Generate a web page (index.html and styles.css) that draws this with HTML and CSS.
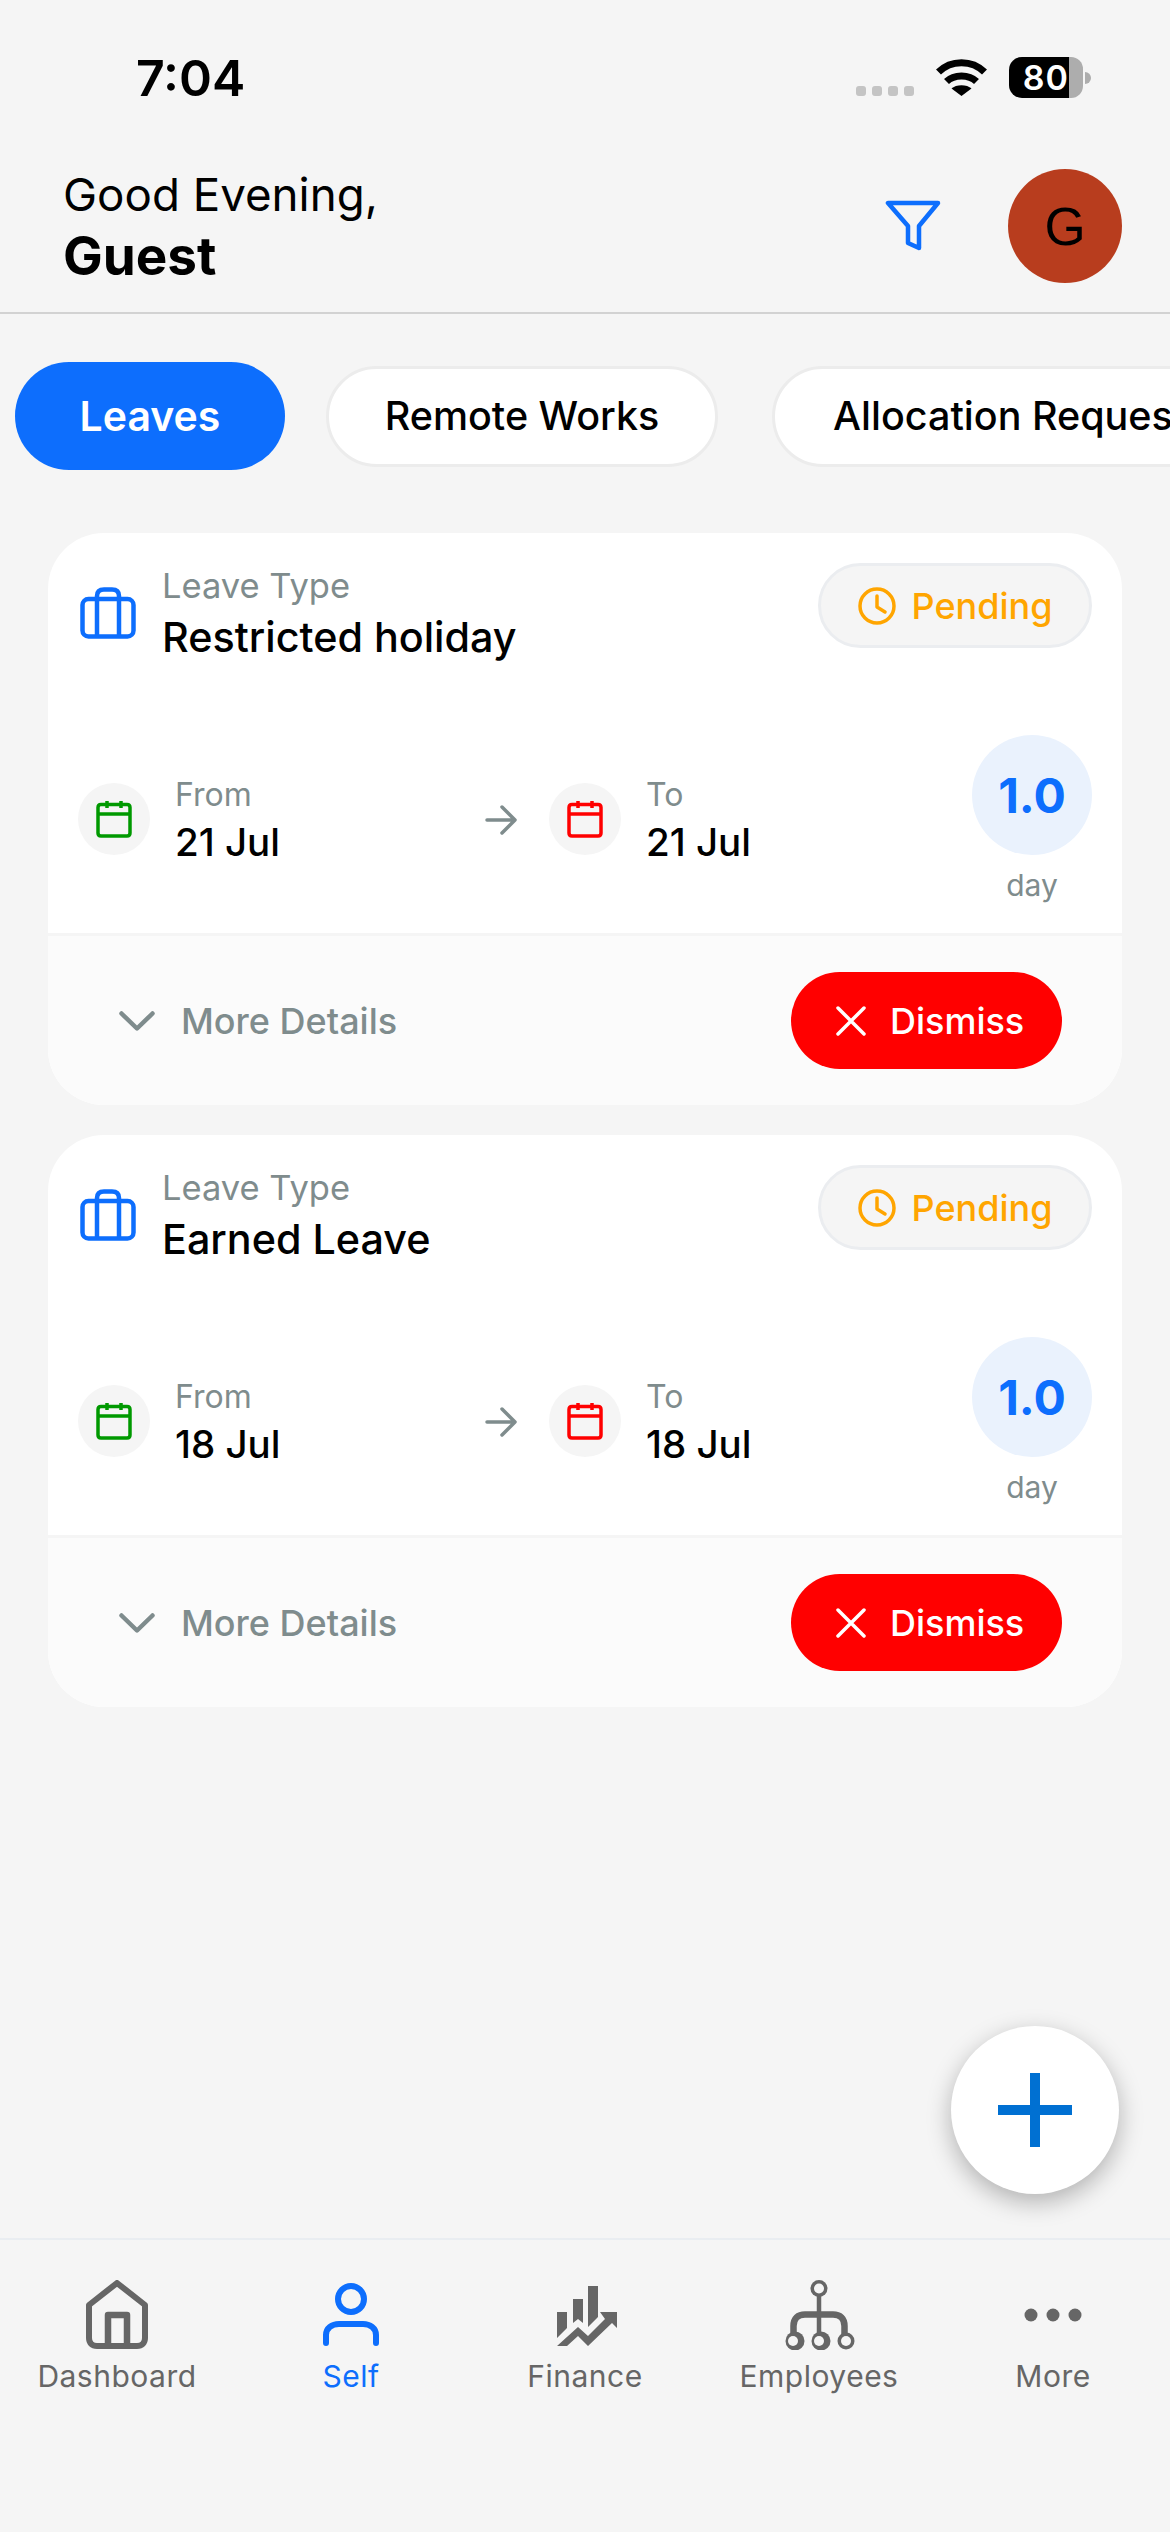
FILE: index.html
```html
<!DOCTYPE html>
<html lang="en">
<head>
<meta charset="utf-8">
<title>Leaves</title>
<link rel="stylesheet" href="styles.css">
</head>
<body>
<div class="app">
  <div class="status">
    <span class="time">7:04</span>
    <div class="status-right">
      <div class="signal"><i></i><i></i><i></i><i></i></div>
      <svg class="wifi" width="51" height="37" viewBox="0 0 51 37"><path d="M2.500 13 C15 0.500 36 0.500 48.500 13" fill="none" stroke="#000" stroke-width="7"/><path d="M10.500 22.500 C18 15 33 15 40.500 22.500" fill="none" stroke="#000" stroke-width="7"/><path d="M25.500 37 L15.500 29.500 C20 25 31 25 35.500 29.500 Z" fill="#000"/></svg>
      <div class="battery"><div class="batt-body"><span class="batt-num">80</span></div><div class="batt-rest"></div><div class="batt-tip"></div></div>
    </div>
  </div>
  <header class="header">
    <div class="greet">
      <div class="greet-line">Good Evening,</div>
      <div class="greet-name">Guest</div>
    </div>
    <svg class="filter" width="56" height="52" viewBox="0 0 56 52"><path d="M3 3 H53 L34 26 V48 L23 43 V26 Z" fill="none" stroke="#0d6efd" stroke-width="4.500" stroke-linejoin="round"/></svg>
    <div class="avatar">G</div>
  </header>
  <nav class="tabs">
    <div class="tab tab-active">Leaves</div>
    <div class="tab tab-b">Remote Works</div>
    <div class="tab tab-c">Allocation Requests</div>
  </nav>
  <main class="list">
    <article class="card">
      <div class="card-top">
        <svg class="case" width="56" height="52" viewBox="0 0 56 52"><rect x="2.500" y="12" width="51" height="37.500" rx="6" fill="none" stroke="#0d6efd" stroke-width="4.500"/><path d="M17 49 V9 C17 4 20 2.500 24 2.500 H32 C36 2.500 39 4 39 9 V49" fill="none" stroke="#0d6efd" stroke-width="4.500"/></svg>
        <div class="type">
          <div class="label">Leave Type</div>
          <div class="type-name">Restricted holiday</div>
        </div>
        <div class="pending">
          <svg width="38" height="38" viewBox="0 0 38 38"><circle cx="19" cy="19" r="17" fill="none" stroke="#ffa500" stroke-width="3.500"/><path d="M19 9 V20 L27 25" fill="none" stroke="#ffa500" stroke-width="3.500" stroke-linecap="round" stroke-linejoin="round"/></svg>
          <span>Pending</span>
        </div>
      </div>
      <div class="dates">
        <div class="date date-from">
          <div class="cal-wrap"><svg width="36" height="38" viewBox="0 0 36 38"><path d="M5 4.500 H31 Q34 4.500 34 7.500 V33 Q34 36 31 36 H5 Q2 36 2 33 V7.500 Q2 4.500 5 4.500 Z M2 14 H34 M11 1 V8 M25 1 V8" fill="none" stroke="#009900" stroke-width="3.500"/></svg></div>
          <div class="date-text"><div class="label-s">From</div><div class="date-val">21 Jul</div></div>
        </div>
        <svg class="arrow" width="32" height="32" viewBox="0 0 32 32"><path d="M2 16 H29 M17 3 L30 16 L17 29" fill="none" stroke="#7f8c8d" stroke-width="3.500" stroke-linecap="round" stroke-linejoin="round"/></svg>
        <div class="date date-to">
          <div class="cal-wrap"><svg width="36" height="38" viewBox="0 0 36 38"><path d="M5 4.500 H31 Q34 4.500 34 7.500 V33 Q34 36 31 36 H5 Q2 36 2 33 V7.500 Q2 4.500 5 4.500 Z M2 14 H34 M11 1 V8 M25 1 V8" fill="none" stroke="#ff0000" stroke-width="3.500"/></svg></div>
          <div class="date-text"><div class="label-s">To</div><div class="date-val">21 Jul</div></div>
        </div>
        <div class="days"><div class="days-num">1.0</div><div class="days-unit">day</div></div>
      </div>
      <div class="card-foot">
        <div class="more">
          <svg width="36" height="20" viewBox="0 0 36 20"><path d="M2.500 2.500 L18 17.500 L33.500 2.500" fill="none" stroke="#7f8c8d" stroke-width="4.500" stroke-linecap="round" stroke-linejoin="round"/></svg>
          <span>More Details</span>
        </div>
        <div class="dismiss">
          <svg width="30" height="30" viewBox="0 0 30 30"><path d="M2 2 L28 28 M28 2 L2 28" stroke="#fff" stroke-width="3.500" stroke-linecap="round"/></svg>
          <span>Dismiss</span>
        </div>
      </div>
    </article>
    <article class="card">
      <div class="card-top">
        <svg class="case" width="56" height="52" viewBox="0 0 56 52"><rect x="2.500" y="12" width="51" height="37.500" rx="6" fill="none" stroke="#0d6efd" stroke-width="4.500"/><path d="M17 49 V9 C17 4 20 2.500 24 2.500 H32 C36 2.500 39 4 39 9 V49" fill="none" stroke="#0d6efd" stroke-width="4.500"/></svg>
        <div class="type">
          <div class="label">Leave Type</div>
          <div class="type-name">Earned Leave</div>
        </div>
        <div class="pending">
          <svg width="38" height="38" viewBox="0 0 38 38"><circle cx="19" cy="19" r="17" fill="none" stroke="#ffa500" stroke-width="3.500"/><path d="M19 9 V20 L27 25" fill="none" stroke="#ffa500" stroke-width="3.500" stroke-linecap="round" stroke-linejoin="round"/></svg>
          <span>Pending</span>
        </div>
      </div>
      <div class="dates">
        <div class="date date-from">
          <div class="cal-wrap"><svg width="36" height="38" viewBox="0 0 36 38"><path d="M5 4.500 H31 Q34 4.500 34 7.500 V33 Q34 36 31 36 H5 Q2 36 2 33 V7.500 Q2 4.500 5 4.500 Z M2 14 H34 M11 1 V8 M25 1 V8" fill="none" stroke="#009900" stroke-width="3.500"/></svg></div>
          <div class="date-text"><div class="label-s">From</div><div class="date-val">18 Jul</div></div>
        </div>
        <svg class="arrow" width="32" height="32" viewBox="0 0 32 32"><path d="M2 16 H29 M17 3 L30 16 L17 29" fill="none" stroke="#7f8c8d" stroke-width="3.500" stroke-linecap="round" stroke-linejoin="round"/></svg>
        <div class="date date-to">
          <div class="cal-wrap"><svg width="36" height="38" viewBox="0 0 36 38"><path d="M5 4.500 H31 Q34 4.500 34 7.500 V33 Q34 36 31 36 H5 Q2 36 2 33 V7.500 Q2 4.500 5 4.500 Z M2 14 H34 M11 1 V8 M25 1 V8" fill="none" stroke="#ff0000" stroke-width="3.500"/></svg></div>
          <div class="date-text"><div class="label-s">To</div><div class="date-val">18 Jul</div></div>
        </div>
        <div class="days"><div class="days-num">1.0</div><div class="days-unit">day</div></div>
      </div>
      <div class="card-foot">
        <div class="more">
          <svg width="36" height="20" viewBox="0 0 36 20"><path d="M2.500 2.500 L18 17.500 L33.500 2.500" fill="none" stroke="#7f8c8d" stroke-width="4.500" stroke-linecap="round" stroke-linejoin="round"/></svg>
          <span>More Details</span>
        </div>
        <div class="dismiss">
          <svg width="30" height="30" viewBox="0 0 30 30"><path d="M2 2 L28 28 M28 2 L2 28" stroke="#fff" stroke-width="3.500" stroke-linecap="round"/></svg>
          <span>Dismiss</span>
        </div>
      </div>
    </article>
  </main>
  <div class="fab"><svg width="74" height="74" viewBox="0 0 74 74"><path d="M37 0 V74 M0 37 H74" stroke="#0070d2" stroke-width="10"/></svg></div>
  <footer class="tabbar">
    <div class="item">
      <svg width="64" height="70" viewBox="0 0 64 70"><path d="M32 3 L60 25 V58 C60 63 57 66 52 66 H12 C7 66 4 63 4 58 V25 Z" fill="none" stroke="#666" stroke-width="6" stroke-linejoin="round"/><path d="M23 66 V35 H42 V66" fill="none" stroke="#666" stroke-width="6.500" stroke-linejoin="round"/></svg>
      <span>Dashboard</span>
    </div>
    <div class="item item-on">
      <svg width="64" height="70" viewBox="0 0 64 70"><circle cx="32" cy="19" r="13" fill="none" stroke="#0d6efd" stroke-width="6"/><path d="M7 63 V55 C7 48 13 44 20 44 H44 C51 44 57 48 57 55 V63" fill="none" stroke="#0d6efd" stroke-width="6" stroke-linecap="round"/></svg>
      <span>Self</span>
    </div>
    <div class="item">
      <svg width="64" height="70" viewBox="0 0 64 70"><path d="M4 32 H14 V48 L4 58 Z M20 19 H30 V43 L25 39 L20 43 Z M35 6 H45 V37 L35 47 Z M4 66 L25 47 L35 56 L52 39 L47 32 H64 V48 L59 43 L35 66 L25 56 L14 66 Z" fill="#666"/></svg>
      <span>Finance</span>
    </div>
    <div class="item">
      <svg width="72" height="70" viewBox="0 0 72 70"><path d="M36 15 V55" fill="none" stroke="#666" stroke-width="4.500"/><path d="M10.500 55 V46 C10.500 38 15 34.500 22 34.500 H50 C57 34.500 61.500 38 61.500 46 V55" fill="none" stroke="#666" stroke-width="6.500"/><circle cx="36" cy="8.500" r="8.500" fill="#666"/><circle cx="36" cy="8.500" r="5" fill="#f5f5f5"/><circle cx="12" cy="61" r="9.500" fill="#666"/><circle cx="10" cy="61" r="5" fill="#f5f5f5"/><circle cx="38" cy="61" r="9.500" fill="#666"/><circle cx="36" cy="61" r="5" fill="#f5f5f5"/><circle cx="63" cy="61" r="8.500" fill="#666"/><circle cx="63" cy="61" r="5" fill="#f5f5f5"/></svg>
      <span>Employees</span>
    </div>
    <div class="item">
      <svg width="64" height="70" viewBox="0 0 64 70"><circle cx="10" cy="35" r="6.500" fill="#666"/><circle cx="32" cy="35" r="6.500" fill="#666"/><circle cx="54" cy="35" r="6.500" fill="#666"/></svg>
      <span>More</span>
    </div>
  </footer>
</div>
</body>
</html>
```
FILE: styles.css
```css
* { box-sizing: border-box; }
html, body { margin: 0; padding: 0; }
body { background: #f5f5f5; font-family: Inter, "Liberation Sans", sans-serif; color: #000; }
.app { width: 1170px; height: 2532px; position: relative; overflow: hidden; display: flex; flex-direction: column; background: #f5f5f5; }

.status { height: 150px; display: flex; justify-content: space-between; align-items: flex-start; padding: 48px 0 0 136px; flex: none; }
.time { font-size: 50px; font-weight: 600; line-height: 60px; }
.status-right { display: flex; align-items: flex-start; margin-right: 79px; margin-top: 9px; }
.signal { display: flex; gap: 6px; margin-top: 29px; margin-right: 22px; }
.signal i { width: 10px; height: 10px; border-radius: 3px; background: #c4c4c4; display: block; }
.wifi { margin-top: 2px; margin-right: 22px; }
.battery { display: flex; align-items: center; height: 41px; }
.batt-body { width: 60px; height: 41px; background: #000; border-radius: 13px 0 0 13px; display: flex; align-items: center; justify-content: flex-end; }
.batt-num { color: #fff; font-size: 34px; font-weight: 600; letter-spacing: 1px; }
.batt-rest { width: 14px; height: 41px; background: #adadad; border-radius: 0 12px 12px 0; }
.batt-tip { width: 6px; height: 12px; background: #adadad; border-radius: 0 6px 6px 0; margin-left: 2px; }

.header { height: 164px; flex: none; display: flex; align-items: center; padding: 0 48px 10px 63px; border-bottom: 2px solid #d2d2d2; }
.greet { flex: 1; margin-top: -3px; }
.greet-line { font-size: 45.700px; line-height: 62px; }
.greet-name { font-size: 53px; font-weight: 700; line-height: 60px; }
.filter { margin-right: 67px; }
.avatar { width: 114px; height: 114px; border-radius: 50%; background: #b83d1e; display: flex; align-items: center; justify-content: center; font-size: 53px; font-family: "Liberation Sans", sans-serif; }

.tabs { display: flex; align-items: center; padding: 0 0 0 15px; margin-top: 48px; height: 108px; flex: none; overflow: hidden; gap: 41px; }
.tab { height: 101px; border-radius: 51px; background: #fff; border: 3px solid #ececec; display: flex; align-items: center; justify-content: center; font-size: 39.500px; font-weight: 500; white-space: nowrap; flex: none; }
.tab-active { width: 270px; height: 108px; border-radius: 54px; background: #0d6efd; border: 0; color: #fff; font-size: 41px; font-weight: 600; }
.tab-b { width: 392px; margin-right: 13px; }
.tab-c { width: 460px; justify-content: flex-start; padding-left: 58px; }

.list { padding: 63px 48px 0; display: flex; flex-direction: column; gap: 30px; flex: none; }
.card { height: 572px; background: #fff; border-radius: 56px; overflow: hidden; display: flex; flex-direction: column; }
.card-top { height: 198px; display: flex; align-items: flex-start; padding: 30px 30px 0 32px; flex: none; }
.case { margin-top: 24px; margin-right: 26px; flex: none; }
.type { flex: 1; }
.label { font-size: 34.500px; color: #7f8c8d; line-height: 44px; margin-top: 1px; }
.type-name { font-size: 41.300px; font-weight: 500; line-height: 56px; margin-top: 1px; }
.pending { width: 274px; height: 85px; border-radius: 43px; background: #f5f5f5; border: 3px solid #ebedf0; display: flex; align-items: center; justify-content: center; gap: 16px; color: #ffa500; font-size: 36px; font-weight: 500; }

.dates { height: 202px; display: flex; align-items: flex-start; padding: 0 30px; flex: none; }
.date { display: flex; align-items: flex-start; margin-top: 52px; }
.cal-wrap { width: 72px; height: 72px; border-radius: 50%; background: #f5f5f5; display: flex; align-items: center; justify-content: center; flex: none; }
.date-text { margin-left: 25px; margin-top: -10px; }
.label-s { font-size: 32px; color: #7f8c8d; line-height: 44px; }
.date-val { font-size: 38.500px; font-weight: 500; line-height: 50px; }
.date-from { width: 407px; flex: none; }
.arrow { margin: 73px 32px 0 0; flex: none; }
.date-to { flex: 1; }
.days { width: 120px; display: flex; flex-direction: column; align-items: center; flex: none; margin-top: 4px; }
.days-num { width: 120px; height: 120px; border-radius: 50%; background: #eaf2fd; color: #0d6efd; font-size: 48px; font-weight: 700; display: flex; align-items: center; justify-content: center; }
.days-unit { font-size: 30px; color: #7f8c8d; line-height: 40px; margin-top: 10px; }

.card-foot { flex: 1; background: #fbfbfb; border-top: 3px solid #f5f5f5; display: flex; align-items: center; justify-content: space-between; padding: 0 60px 0 71px; }
.more { display: flex; align-items: center; gap: 26px; color: #7f8c8d; font-size: 36px; font-weight: 500; }
.dismiss { width: 271px; height: 97px; border-radius: 49px; background: #ff0000; color: #fff; display: flex; align-items: center; justify-content: flex-start; padding-left: 45px; gap: 24px; font-size: 36px; font-weight: 500; }

.fab { position: absolute; left: 951px; top: 2026px; width: 168px; height: 168px; border-radius: 50%; background: #fff; box-shadow: 0 8px 24px rgba(0,0,0,0.28); display: flex; align-items: center; justify-content: center; }

.tabbar { position: absolute; left: 0; right: 0; top: 2238px; height: 294px; border-top: 2px solid #e9edf1; display: flex; padding-top: 40px; background: #f5f5f5; }
.item { width: 234px; display: flex; flex-direction: column; align-items: center; color: #666; font-size: 30px; font-weight: 400; letter-spacing: 0.500px; }
.item span { margin-top: 6px; line-height: 40px; }
.item-on { color: #0d6efd; }
```
